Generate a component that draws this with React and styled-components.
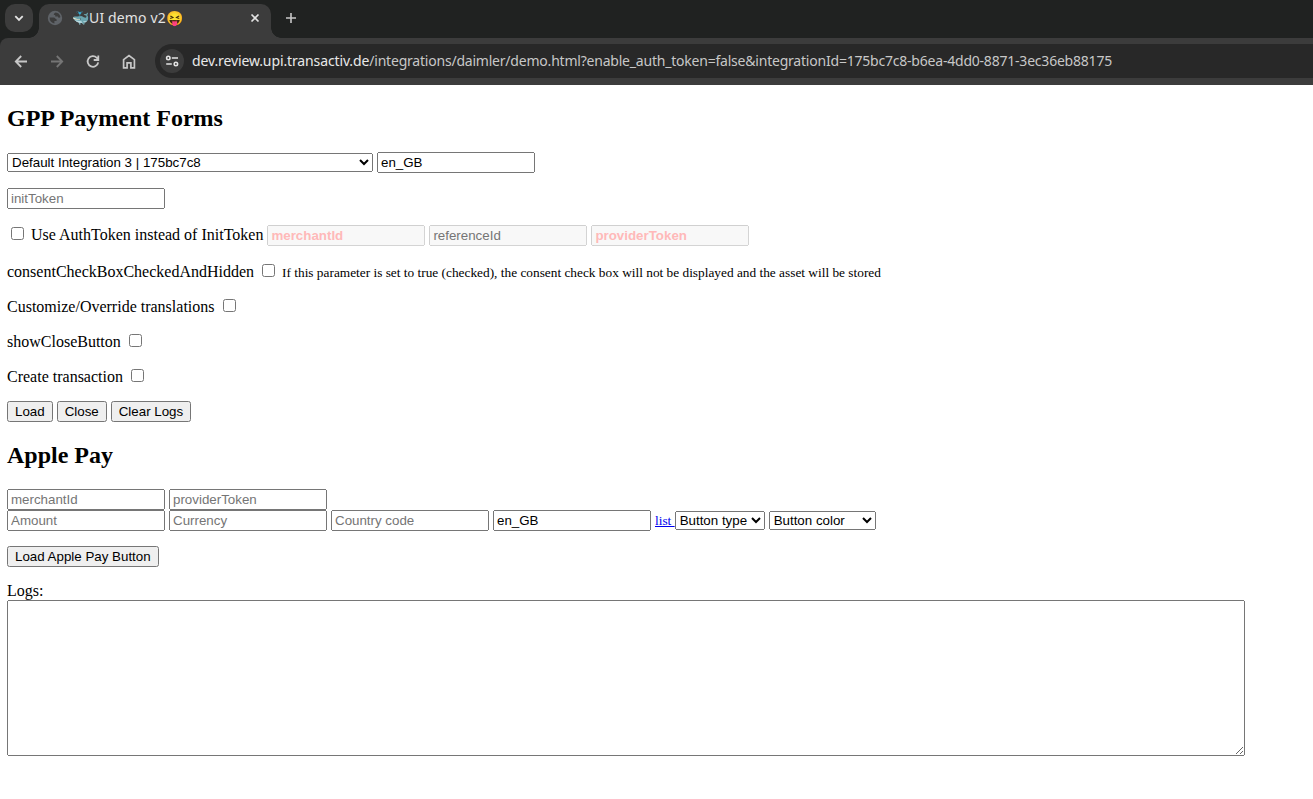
import React from 'react';
import styled, { createGlobalStyle } from 'styled-components';

const GlobalStyle = createGlobalStyle`
  html, body {
    margin: 0;
    background: #ffffff;
    overflow: hidden;
  }
`;

const Window = styled.div`
  height: 799px;
  display: flex;
  flex-direction: column;
  overflow: hidden;
`;

const TabStrip = styled.header`
  height: 38px;
  flex: none;
  display: flex;
  align-items: flex-start;
  padding: 4px 0 0 5px;
  box-sizing: border-box;
  background: #202221;
  color: #e3e3e3;
`;

const TabSearch = styled.div`
  width: 28px;
  height: 28px;
  display: flex;
  align-items: center;
  justify-content: center;
  border-radius: 10px;
  background: #3c3c3c;
`;

const Tab = styled.div`
  position: relative;
  width: 232px;
  height: 34px;
  margin-left: 6px;
  padding: 0 10px 6px 8px;
  box-sizing: border-box;
  display: flex;
  align-items: center;
  border-radius: 10px 10px 0 0;
  background: #3c3c3c;

  &::before,
  &::after {
    content: '';
    position: absolute;
    bottom: 0;
    width: 10px;
    height: 10px;
  }

  &::before {
    left: -10px;
    background: radial-gradient(circle at 0 0, transparent 9.5px, #3c3c3c 10px);
  }

  &::after {
    right: -10px;
    background: radial-gradient(circle at 100% 0, transparent 9.5px, #3c3c3c 10px);
  }
`;

const TabTitle = styled.span`
  flex: 1;
  display: flex;
  align-items: center;
  margin-left: 9px;
  font: 14px/18px 'Noto Sans', sans-serif;
  letter-spacing: 0.12px;
  white-space: nowrap;
`;

const NewTab = styled.div`
  width: 28px;
  height: 28px;
  margin-left: 6px;
  display: flex;
  align-items: center;
  justify-content: center;
  color: #c7c7c7;
`;

const Toolbar = styled.nav`
  height: 47px;
  flex: none;
  display: flex;
  align-items: center;
  box-sizing: border-box;
  padding: 0 0 1px 11px;
  background: #3c3c3c;
  border-top-left-radius: 8px;
`;

const ToolbarBack = styled.div`
  flex: none;
  background: #202221;
`;

const NavButton = styled.div`
  width: 20px;
  height: 20px;
  margin-right: 16px;
  display: flex;
  color: ${({ $muted }) => ($muted ? '#757575' : '#c7c7c7')};
`;

const AddressBar = styled.div`
  flex: 1;
  height: 34px;
  display: flex;
  align-items: center;
  padding-left: 5px;
  border-radius: 17px 0 0 17px;
  background: #282828;
`;

const SiteInfo = styled.div`
  width: 24px;
  height: 24px;
  display: flex;
  border-radius: 50%;
  background: #3c3c3c;
`;

const Url = styled.span`
  margin-left: 8px;
  font: 14px/18px 'Noto Sans', sans-serif;
  letter-spacing: -0.212px;
  color: #c7c7c7;
  white-space: nowrap;

  b {
    font-weight: 400;
    letter-spacing: -0.12px;
    color: #e8e8e8;
  }
`;

const Page = styled.main`
  flex: 1;
  padding: 0 8px 0 7px;
  overflow: hidden;
  font-family: 'Liberation Serif', serif;
  font-size: 16px;
  color: #000000;
  white-space: nowrap;
`;

const Heading = styled.h2`
  margin: 20px 0;
  font-size: 24px;
  line-height: 27px;
`;

const Row = styled.div`
  height: ${({ $height }) => $height || 21}px;
  margin-bottom: ${({ $gap }) => $gap ?? 15}px;
`;

const Field = styled.input`
  width: 158px;
  height: 21px;
  box-sizing: border-box;
  font-family: 'Liberation Sans', sans-serif;

  &::placeholder {
    color: ${({ $required }) => ($required ? '#ffb9b9' : '#757575')};
    font-weight: ${({ $required }) => ($required ? 700 : 400)};
  }
`;

const Select = styled.select`
  width: ${({ $width }) => $width}px;
  font-family: 'Liberation Sans', sans-serif;
`;

const Button = styled.button`
  height: 21px;
  font-family: 'Liberation Sans', sans-serif;
`;

const Hint = styled.small`
  font-size: 13.333px;
`;

const ListLink = styled.a`
  font-size: 13.333px;
  color: #0000ee;
  text-decoration: underline;
  white-space: pre;
`;

const Logs = styled.textarea`
  display: block;
  width: 1238px;
  height: 156px;
  box-sizing: border-box;
`;

function Stroke({ d, size = 20, width = 1.8 }) {
  return (
    <svg width={size} height={size} viewBox={`0 0 ${size} ${size}`} fill="none" stroke="currentColor" strokeWidth={width}>
      <path d={d} />
    </svg>
  );
}

function GlobeIcon() {
  return (
    <svg width="16" height="16" viewBox="0 0 16 16">
      <circle cx="8" cy="8" r="7.2" fill="#5f6368" />
      <path d="M2.6 7.6h4c1.8 0 1.4 1.7 3 1.7v1.6H7.4v2.5A5.5 5.5 0 0 1 2.6 7.6zM8.6 2.5A5.5 5.5 0 0 1 13.4 7c-.8 1.2-2.2.8-2.6-.5H8.2V5H6.8c0-1.3.6-1.9 1.8-2.5z" fill="#3c3c3c" />
    </svg>
  );
}

function SiteInfoIcon() {
  return (
    <svg width="24" height="24" viewBox="0 0 24 24" fill="none" stroke="#e3e3e3" strokeWidth="1.6">
      <circle cx="8.3" cy="9" r="1.7" />
      <path d="M11.8 9H18M6.2 15h5.6" />
      <circle cx="15.9" cy="15" r="1.7" />
    </svg>
  );
}

function CheckRow({ label }) {
  return (
    <Row $height={19} $gap={16}>
      {label} <input type="checkbox" />
    </Row>
  );
}

function App() {
  return (
    <Window>
      <GlobalStyle />
      <TabStrip>
        <TabSearch>
          <Stroke size={12} width={1.8} d="M2.3 4.2L6 7.9l3.7-3.7" />
        </TabSearch>
        <Tab>
          <GlobeIcon />
          <TabTitle>🐳UI demo v2😝</TabTitle>
          <Stroke size={12} width={1.7} d="M2.5 2.5l7 7M9.5 2.5l-7 7" />
        </Tab>
        <NewTab>
          <Stroke size={12} width={1.6} d="M6 1v10M1 6h10" />
        </NewTab>
      </TabStrip>
      <ToolbarBack>
        <Toolbar>
          <NavButton><Stroke d="M16 10.5H5.2M10.2 5L4.8 10.5l5.4 5.5" /></NavButton>
          <NavButton $muted><Stroke d="M4 10.5h10.8M9.8 5l5.4 5.5-5.4 5.5" /></NavButton>
          <NavButton><Stroke d="M15.2 11.3A5.3 5.3 0 1 1 13.8 6.8L15.4 8.4M15.3 4.5V9h-4.6" /></NavButton>
          <NavButton><Stroke width={1.7} d="M4.6 16.8V8.6L10 4.5l5.4 4.1v8.2h-3.5v-4.9H8.1v4.9z" /></NavButton>
          <AddressBar>
            <SiteInfo><SiteInfoIcon /></SiteInfo>
            <Url>
              <b>dev.review.upi.transactiv.de</b>/integrations/daimler/demo.html?enable_auth_token=false&amp;integrationId=175bc7c8-b6ea-4dd0-8871-3ec36eb88175
            </Url>
          </AddressBar>
        </Toolbar>
      </ToolbarBack>
      <Page>
        <Heading>GPP Payment Forms</Heading>
        <Row>
          <Select $width={366}>
            <option>Default Integration 3 | 175bc7c8</option>
          </Select>{' '}
          <Field defaultValue="en_GB" />
        </Row>
        <Row>
          <Field placeholder="initToken" />
        </Row>
        <Row $gap={16}>
          <input type="checkbox" /> Use AuthToken instead of InitToken{' '}
          <Field placeholder="merchantId" disabled $required />{' '}
          <Field placeholder="referenceId" disabled />{' '}
          <Field placeholder="providerToken" disabled $required />
        </Row>
        <Row $height={19} $gap={16}>
          consentCheckBoxCheckedAndHidden <input type="checkbox" />{' '}
          <Hint>If this parameter is set to true (checked), the consent check box will not be displayed and the asset will be stored</Hint>
        </Row>
        <CheckRow label="Customize/Override translations" />
        <CheckRow label="showCloseButton" />
        <CheckRow label="Create transaction" />
        <Row>
          <Button>Load</Button> <Button>Close</Button> <Button>Clear Logs</Button>
        </Row>
        <Heading>Apple Pay</Heading>
        <Row $gap={0}>
          <Field placeholder="merchantId" /> <Field placeholder="providerToken" />
        </Row>
        <Row>
          <Field placeholder="Amount" /> <Field placeholder="Currency" />{' '}
          <Field placeholder="Country code" /> <Field defaultValue="en_GB" />{' '}
          <ListLink href="#">{'list '}</ListLink>
          <Select $width={90}>
            <option>Button type</option>
          </Select>{' '}
          <Select $width={107}>
            <option>Button color</option>
          </Select>
        </Row>
        <Row>
          <Button>Load Apple Pay Button</Button>
        </Row>
        <Row $height={18} $gap={0}>Logs:</Row>
        <Logs />
      </Page>
    </Window>
  );
}

export default App;
